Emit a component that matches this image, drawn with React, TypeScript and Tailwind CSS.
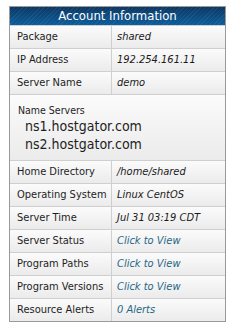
import React from 'react';

interface InfoRow {
  label: string;
  value: string;
  link?: boolean;
}

const TOP_ROWS: InfoRow[] = [
  { label: 'Package', value: 'shared' },
  { label: 'IP Address', value: '192.254.161.11' },
  { label: 'Server Name', value: 'demo' },
];

const BOTTOM_ROWS: InfoRow[] = [
  { label: 'Home Directory', value: '/home/shared' },
  { label: 'Operating System', value: 'Linux CentOS' },
  { label: 'Server Time', value: 'Jul 31 03:19 CDT' },
  { label: 'Server Status', value: 'Click to View', link: true },
  { label: 'Program Paths', value: 'Click to View', link: true },
  { label: 'Program Versions', value: 'Click to View', link: true },
  { label: 'Resource Alerts', value: '0 Alerts', link: true },
];

const Row: React.FC<{ row: InfoRow }> = ({ row }) => (
  <div className="flex h-[23px] border-t border-[#cfcfcf] bg-gradient-to-b from-[#fbfbfb] to-[#ebebeb]">
    <div className="w-[102px] shrink-0 border-r border-[#cfcfcf] pl-[7px] flex items-center text-[11px] text-[#1e1e1e] whitespace-nowrap">
      {row.label}
    </div>
    <div
      className={`flex-1 pl-[5px] flex items-center text-[11px] italic whitespace-nowrap ${
        row.link ? 'text-[#1f6784]' : 'text-[#1a1a1a]'
      }`}
    >
      {row.value}
    </div>
  </div>
);

export default function App() {
  return (
    <div className="w-[245px] h-[326px] bg-white pt-[6px] pl-[9px]" style={{ fontFamily: '"DejaVu Sans Condensed", "DejaVu Sans", sans-serif' }}>
      <div className="w-[217px] border border-[#9a9a9a]">
        <div
          className="h-[18px] flex items-center justify-center text-white text-[13px]"
          style={{
            backgroundImage:
              'repeating-linear-gradient(135deg, rgba(255,255,255,0.06) 0 1px, transparent 1px 3px), linear-gradient(to bottom, #0c3762, #0b5d9c)',
          }}
        >
          Account Information
        </div>
        {TOP_ROWS.map(r => (
          <Row key={r.label} row={r} />
        ))}
        <div className="h-[66px] border-t border-[#cfcfcf] bg-gradient-to-b from-[#fbfbfb] to-[#ebebeb] pl-[8px] pt-[8px] text-[#1e1e1e]">
          <div className="text-[10.5px] leading-[14px]">Name Servers</div>
          <div className="pl-[7px] text-[14px] leading-[18px]">ns1.hostgator.com</div>
          <div className="pl-[7px] text-[14px] leading-[18px]">ns2.hostgator.com</div>
        </div>
        {BOTTOM_ROWS.map(r => (
          <Row key={r.label} row={r} />
        ))}
      </div>
    </div>
  );
}
